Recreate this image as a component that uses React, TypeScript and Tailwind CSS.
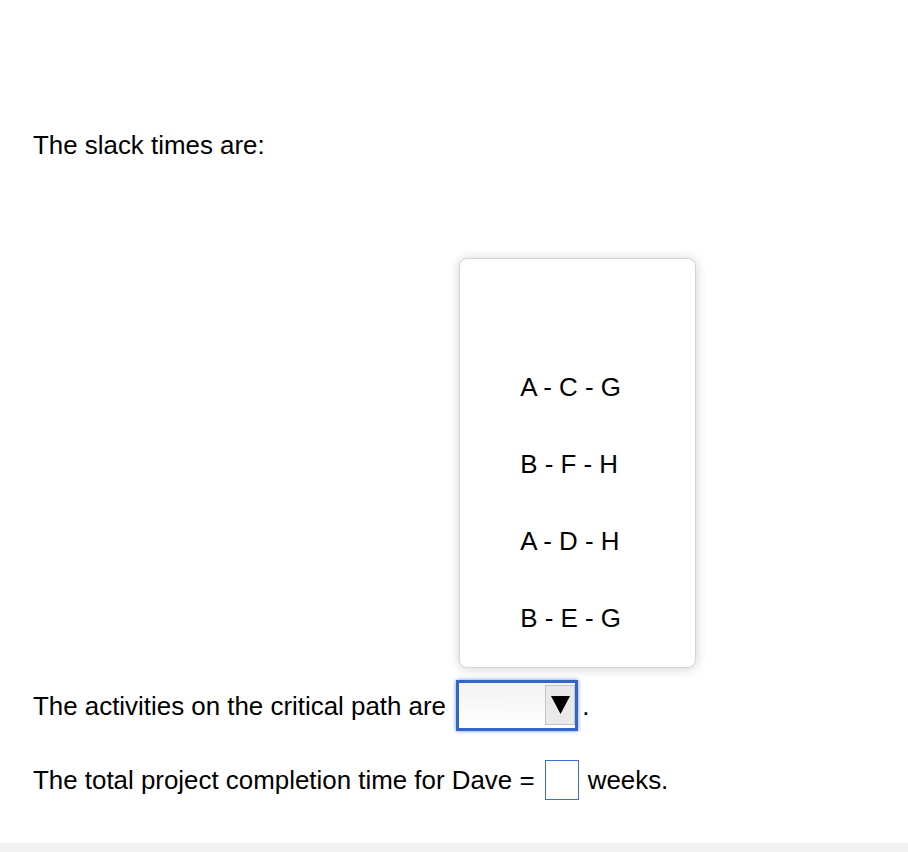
import React from 'react';

const options = ['', 'A - C - G', 'B - F - H', 'A - D - H', 'B - E - G'];

const SelectBox: React.FC = () => {
  return (
    <div className="relative ml-[3px]">
      {/* open dropdown list */}
      <div className="absolute left-[3px] bottom-[63px] w-[237px] h-[410px] py-[12px] bg-white border border-[#d4d4d4] rounded-[8px] shadow-[0_1px_12px_rgba(0,0,0,0.18)]">
        {options.map((o, i) => (
          <div key={i} className="h-[77px] flex items-center pl-[60px] whitespace-pre">
            {o}
          </div>
        ))}
      </div>
      <div className="w-[122px] h-[51px] border-[3px] border-[#3466c9] shadow-[0_0_4px_rgba(52,102,201,0.7)] bg-gradient-to-b from-[#f2f2f2] to-white flex justify-end items-start pt-[2px]">
        <div className="w-[30px] h-[40px] bg-[#e9e9e9] border border-[#c4c4c4] flex items-center justify-center">
          <svg width="19" height="18" viewBox="0 0 19 18">
            <polygon points="0,0 19,0 9.5,18" fill="#000" />
          </svg>
        </div>
      </div>
    </div>
  );
};

const App: React.FC = () => {
  return (
    <div className="w-[908px] bg-white text-black font-['Liberation_Sans',Arial,sans-serif] text-[25.9px] leading-[30px]">
      <div className="h-[843px] pt-[130px] pl-[33px]">
        <p>The slack times are:</p>

        <div className="mt-[520px] flex items-center h-[51px]">
          <span className="whitespace-pre">The activities on the critical path are </span>
          <SelectBox />
          <span className="ml-[4px]">.</span>
        </div>

        <div className="mt-[29px] flex items-center h-[40px]">
          <span className="whitespace-pre">The total project completion time for Dave = </span>
          <div className="ml-[3px] w-[34px] h-[40px] border-[1.5px] border-[#3b6fd0] bg-white"></div>
          <span className="ml-[9px]">weeks.</span>
        </div>
      </div>
      <div className="h-[9px] bg-[#f2f2f2]"></div>
    </div>
  );
};

export default App;
